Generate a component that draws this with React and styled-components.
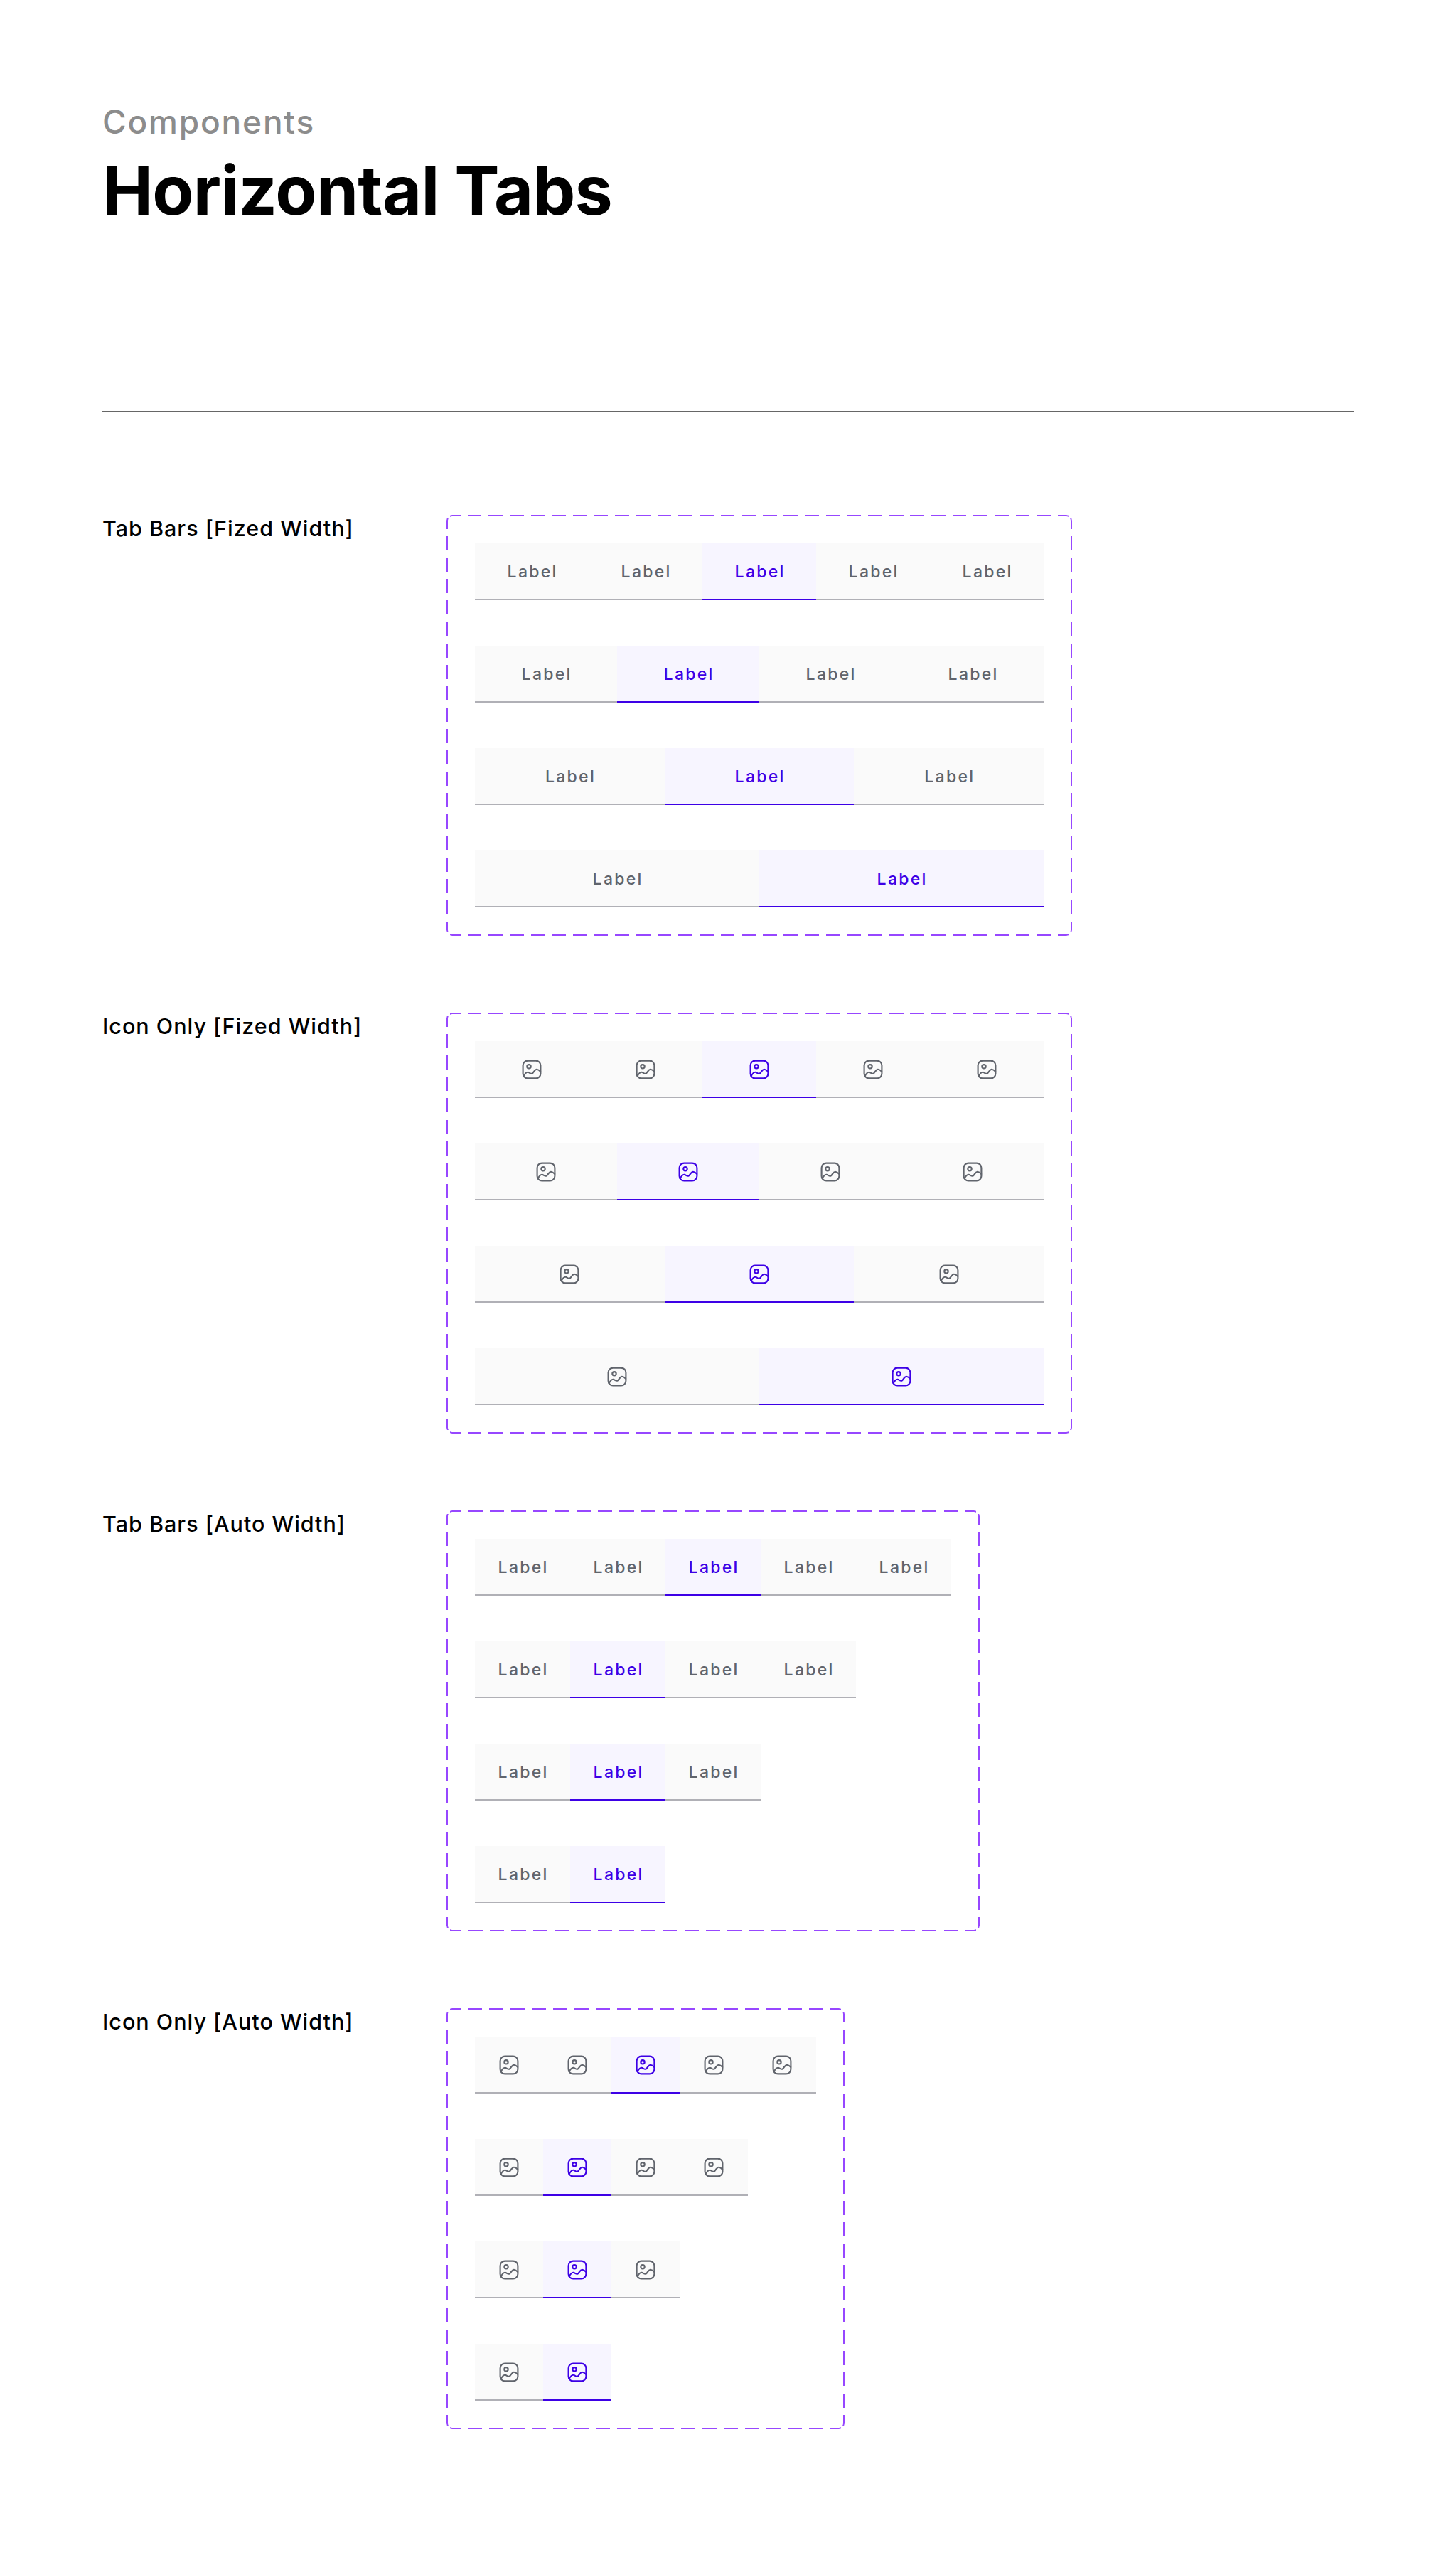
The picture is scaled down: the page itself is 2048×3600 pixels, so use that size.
import React from "react";
import styled, { createGlobalStyle } from "styled-components";

const GlobalStyle = createGlobalStyle`
  *, *::before, *::after { box-sizing: border-box; }
  body {
    margin: 0;
    background: #ffffff;
    font-family: Inter, "Liberation Sans", sans-serif;
    -webkit-font-smoothing: antialiased;
  }
  h1, h2, p { margin: 0; }
`;

const Page = styled.main`
  width: 2048px;
  height: 3600px;
  padding: 144px 144px 0;
  background: #ffffff;
`;

const Header = styled.header`
  height: 436px;
  border-bottom: 2px solid #666666;
`;

const Eyebrow = styled.p`
  font-size: 46px;
  line-height: 55px;
  font-weight: 450;
  letter-spacing: 1.8px;
  color: #8c8c8c;
`;

const Title = styled.h1`
  margin-top: 12px;
  font-size: 95px;
  line-height: 113px;
  font-weight: 700;
  letter-spacing: -0.7px;
  color: #000000;
`;

const Sections = styled.div`
  display: flex;
  flex-direction: column;
  gap: 108px;
  padding-top: 144px;
`;

const Section = styled.section`
  display: grid;
  grid-template-columns: 484px max-content;
  align-items: start;
`;

const SectionTitle = styled.h2`
  font-size: 30.5px;
  line-height: 38px;
  font-weight: 500;
  letter-spacing: 1px;
  color: #000000;
`;

/* Dashes 20px long and 10px apart, stretched so each side starts and ends on a full dash. */
const dashes = (angle, length) => {
  const period = (length - 20) / Math.round((length - 20) / 30);
  const dash = (period * 2) / 3;
  return `repeating-linear-gradient(${angle}, #000 -5px, #000 ${dash - 5}px, transparent ${dash - 5}px, transparent ${period - 5}px)`;
};

const Frame = styled.div`
  position: relative;
  display: flex;
  flex-direction: column;
  align-items: flex-start;
  gap: 64px;
  width: ${(p) => p.$width}px;
  height: 592px;
  padding: 40px;

  &::before {
    content: "";
    position: absolute;
    inset: 0;
    border: 2px solid #9747ff;
    border-radius: 8px;
    pointer-events: none;
    mask-image:
      ${(p) => dashes("90deg", p.$width)},
      ${(p) => dashes("90deg", p.$width)},
      ${dashes("180deg", 592)},
      ${dashes("180deg", 592)};
    mask-size:
      calc(100% - 10px) 4px,
      calc(100% - 10px) 4px,
      4px calc(100% - 10px),
      4px calc(100% - 10px);
    mask-position: center top, center bottom, left center, right center;
    mask-repeat: no-repeat;
    mask-origin: border-box;
    mask-clip: border-box;
  }
`;

const TabBar = styled.div`
  display: flex;
  width: ${(p) => (p.$fixed ? "800px" : "max-content")};
  height: 80px;
`;

const Tab = styled.button`
  display: flex;
  flex: ${(p) => (p.$fixed ? "1 1 0" : "none")};
  align-items: center;
  justify-content: center;
  width: ${(p) => (p.$icon ? "96px" : "134px")};
  height: 78px;
  height: 80px;
  padding: 0;
  border: 0;
  font: inherit;
  color: ${(p) => (p.$active ? "#3d00e6" : "#60646c")};
  background: ${(p) => (p.$active ? "#f7f5ff" : "#fafafa")};
  box-shadow: inset 0 -2px 0 ${(p) => (p.$active ? "#3d00e6" : "#b0b0b6")};
`;

const TabLabel = styled.span`
  margin-right: -2.3px;
  font-size: 23px;
  line-height: 32px;
  font-weight: ${(p) => (p.$active ? 540 : 480)};
  letter-spacing: 2.3px;
`;

const Icon = styled.svg`
  display: block;
  width: 32px;
  height: 32px;
`;

function ImageIcon() {
  return (
    <Icon viewBox="0 0 32 32" fill="none" stroke="currentColor" strokeWidth="2.1" strokeLinecap="round" strokeLinejoin="round">
      <rect x="3.6" y="3.6" width="24.8" height="24.8" rx="6.6" />
      <circle cx="12" cy="11.8" r="2.7" />
      <path d="M4.6 25.2C6.4 21.8 8.4 19.6 10.4 19.7C12.6 19.9 14.2 22.4 16.3 21.7C18.8 20.9 19.6 15.9 22.8 15.7C25 15.6 26.6 17 28.2 18.9" />
    </Icon>
  );
}

const rows = [
  { count: 5, active: 2 },
  { count: 4, active: 1 },
  { count: 3, active: 1 },
  { count: 2, active: 1 },
];

const sections = [
  { title: "Tab Bars [Fized Width]", width: 880, fixed: true, icon: false },
  { title: "Icon Only [Fized Width]", width: 880, fixed: true, icon: true },
  { title: "Tab Bars [Auto Width]", width: 750, fixed: false, icon: false },
  { title: "Icon Only [Auto Width]", width: 560, fixed: false, icon: true },
];

function Tabs({ count, active, fixed, icon }) {
  return (
    <TabBar $fixed={fixed} role="tablist">
      {Array.from({ length: count }, (_, i) => (
        <Tab key={i} role="tab" aria-selected={i === active} $active={i === active} $fixed={fixed} $icon={icon}>
          {icon ? <ImageIcon /> : <TabLabel $active={i === active}>Label</TabLabel>}
        </Tab>
      ))}
    </TabBar>
  );
}

export default function App() {
  return (
    <Page>
      <GlobalStyle />
      <Header>
        <Eyebrow>Components</Eyebrow>
        <Title>Horizontal Tabs</Title>
      </Header>
      <Sections>
        {sections.map((s) => (
          <Section key={s.title}>
            <SectionTitle>{s.title}</SectionTitle>
            <Frame $width={s.width}>
              {rows.map((r) => (
                <Tabs key={r.count} {...r} fixed={s.fixed} icon={s.icon} />
              ))}
            </Frame>
          </Section>
        ))}
      </Sections>
    </Page>
  );
}
